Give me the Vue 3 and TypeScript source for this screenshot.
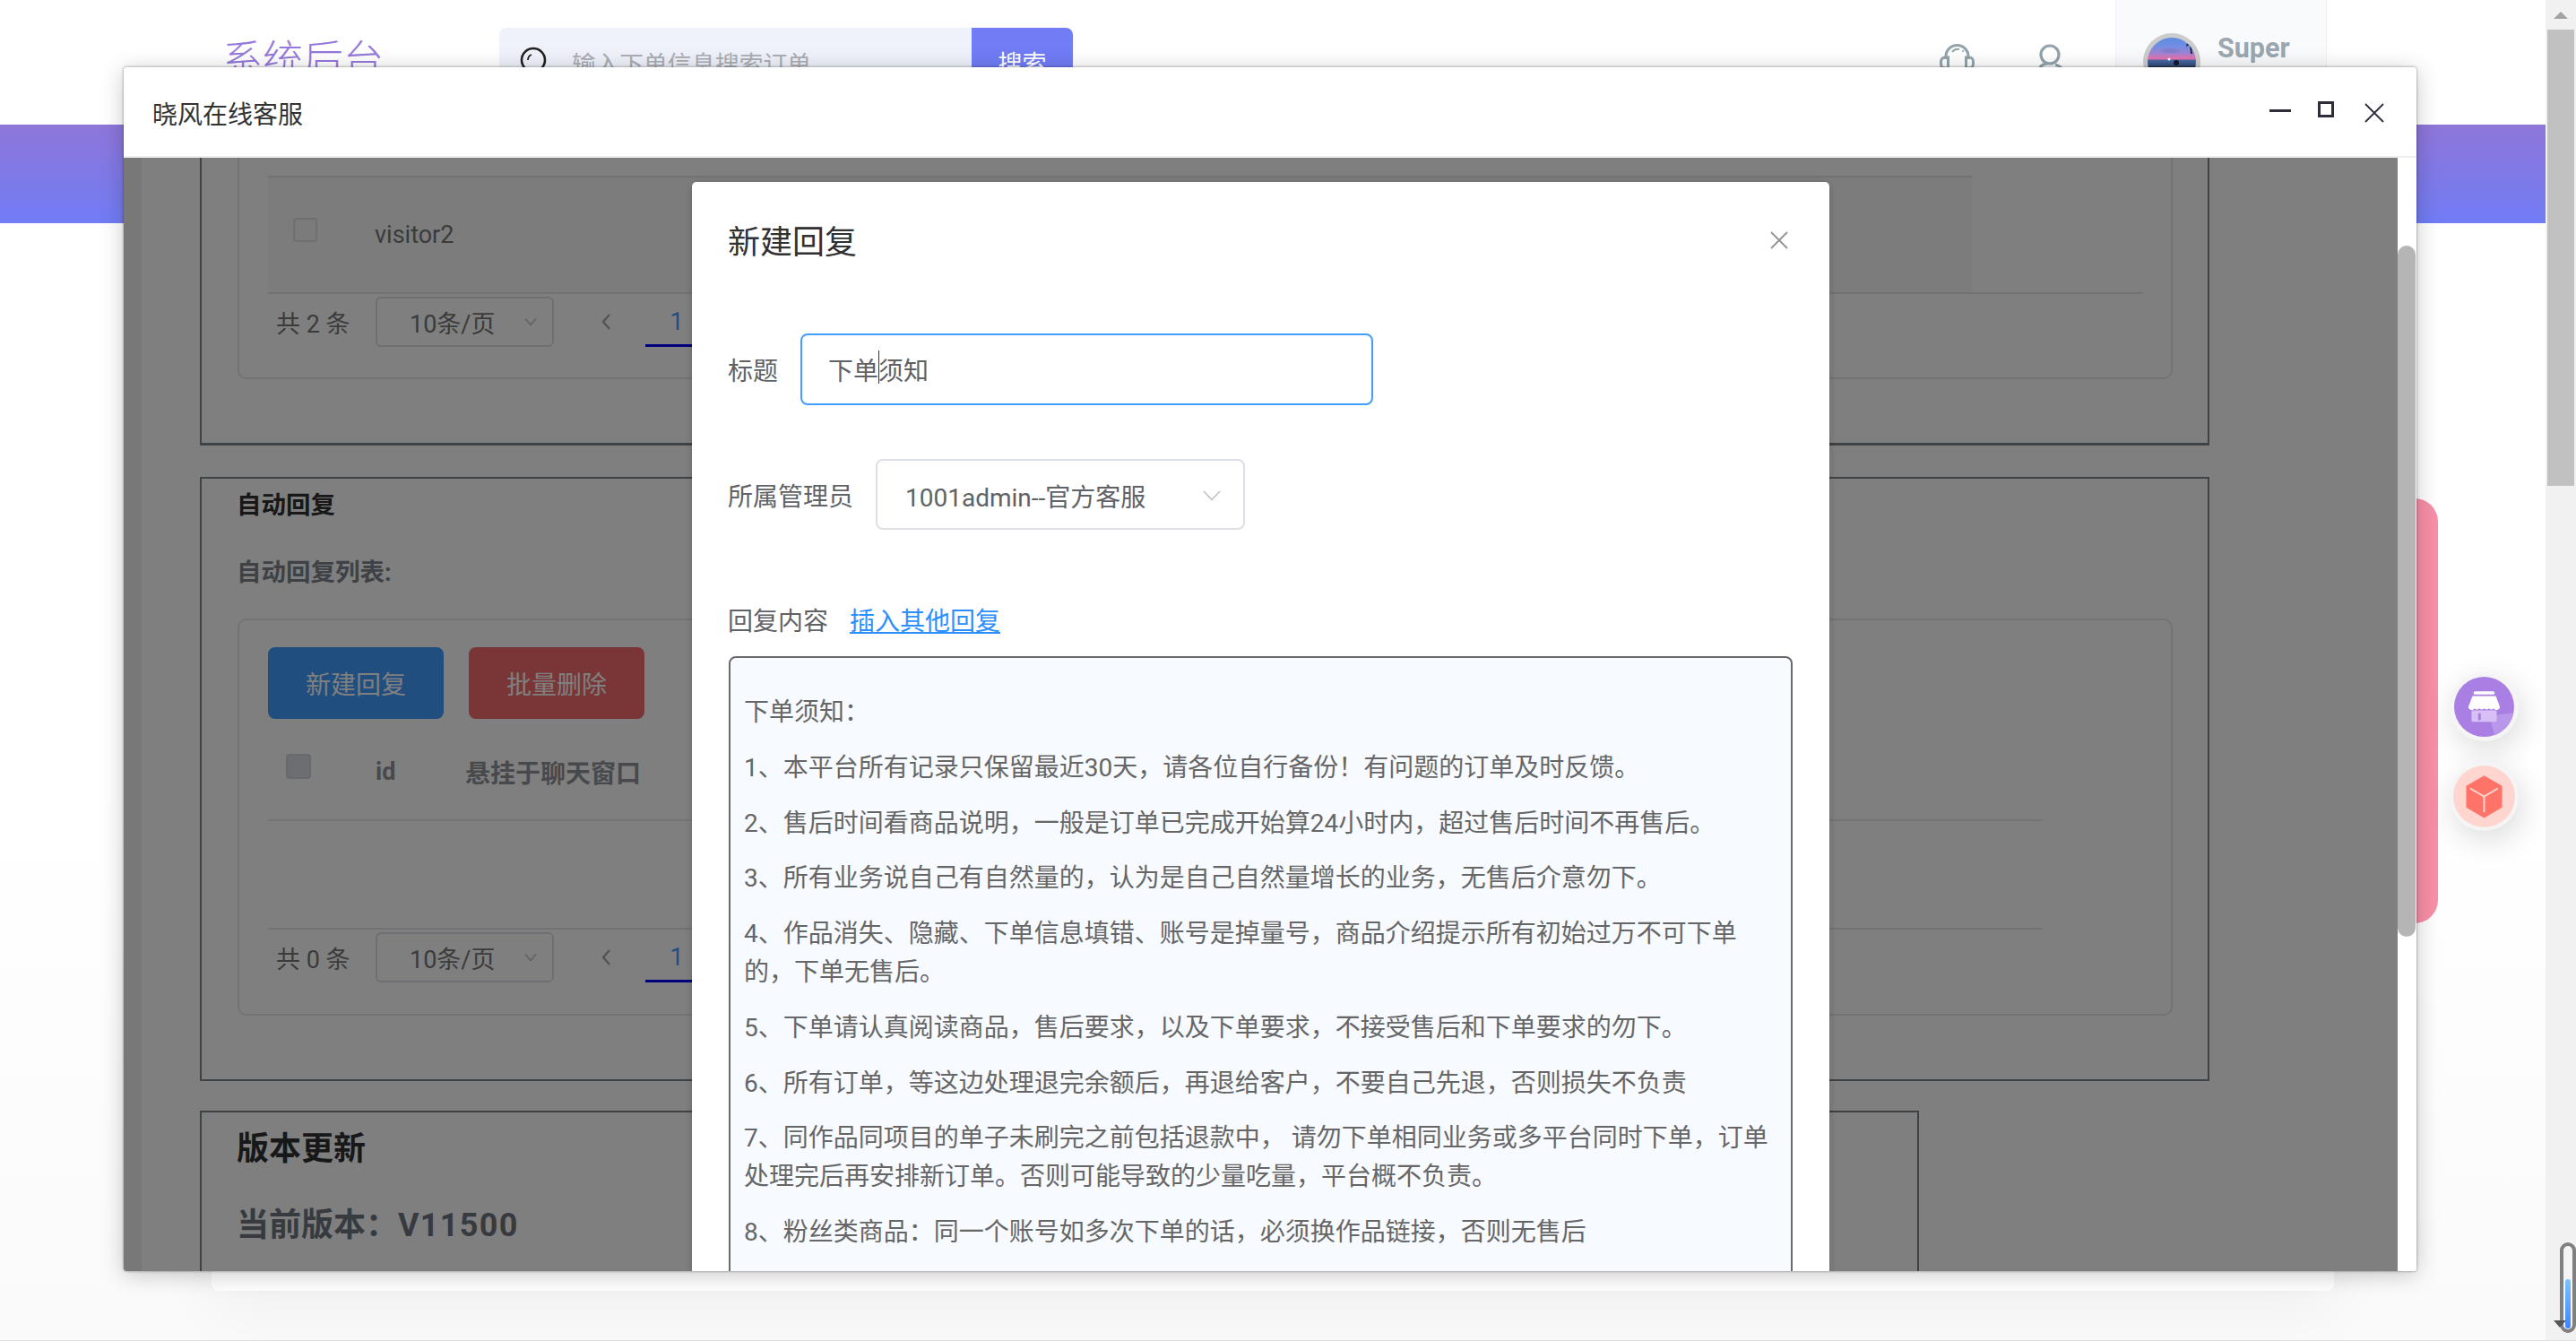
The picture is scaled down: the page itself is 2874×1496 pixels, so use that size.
<script setup lang="ts">
const paragraphs: string[] = [
  '下单须知：',
  '1、本平台所有记录只保留最近30天，请各位自行备份！有问题的订单及时反馈。',
  '2、售后时间看商品说明，一般是订单已完成开始算24小时内，超过售后时间不再售后。',
  '3、所有业务说自己有自然量的，认为是自己自然量增长的业务，无售后介意勿下。',
  '4、作品消失、隐藏、下单信息填错、账号是掉量号，商品介绍提示所有初始过万不可下单的，下单无售后。',
  '5、下单请认真阅读商品，售后要求，以及下单要求，不接受售后和下单要求的勿下。',
  '6、所有订单，等这边处理退完余额后，再退给客户，不要自己先退，否则损失不负责',
  '7、同作品同项目的单子未刷完之前包括退款中， 请勿下单相同业务或多平台同时下单，订单处理完后再安排新订单。否则可能导致的少量吃量，平台概不负责。',
  '8、粉丝类商品：同一个账号如多次下单的话，必须换作品链接，否则无售后',
]
</script>

<template>
  <div class="root">
    <div class="page">
      <header class="top">
        <div class="logo">系统后台</div>
        <div class="search">
          <svg class="search-icon" width="30" height="34" viewBox="0 0 30 34" fill="none" stroke="#222" stroke-width="2.6">
            <circle cx="15" cy="15" r="13" />
            <path d="M9 15c0-3 1.500-5 4-6" stroke-width="1.800" />
            <path d="M24 24l5 6" />
          </svg>
          <span class="search-ph">输入下单信息搜索订单</span>
          <span class="search-btn">搜索</span>
        </div>
        <div class="top-icons">
          <svg width="40" height="44" viewBox="0 0 40 44" fill="none" stroke="#93a3ab" stroke-width="3">
            <path d="M7 17v-3a12.500 12.500 0 0 1 25 0v3" />
            <path d="M14 9a8 8 0 0 1 8-3" stroke-width="2" />
            <circle cx="26" cy="8" r="1.100" fill="#93a3ab" stroke="none" />
            <path d="M9.500 15H6a4.500 4.500 0 0 0-4.500 4.500v3A4.500 4.500 0 0 0 6 27h3.500z" />
            <path d="M29.500 15H33a4.500 4.500 0 0 1 4.500 4.500v3A4.500 4.500 0 0 1 33 27h-3.500z" />
          </svg>
          <svg width="26" height="44" viewBox="0 0 26 44" fill="none" stroke="#93a3ab" stroke-width="3.200">
            <circle cx="12" cy="12" r="10" />
            <path d="M0 27c2-3 5-4.500 9-5M18 23c3 .500 5 2 7 4" />
          </svg>
        </div>
        <div class="user">
          <svg class="avatar" width="64" height="64" viewBox="0 0 64 64">
            <defs>
              <linearGradient id="sky" x1="0" y1="0" x2="0" y2="1">
                <stop offset="0" stop-color="#4f8ae0" />
                <stop offset=".22" stop-color="#6f8fe2" />
                <stop offset=".36" stop-color="#a682d2" />
                <stop offset=".45" stop-color="#ef6fa8" />
                <stop offset=".47" stop-color="#4a6aa8" />
                <stop offset=".56" stop-color="#34507f" />
                <stop offset=".6" stop-color="#1d2538" />
                <stop offset="1" stop-color="#141826" />
              </linearGradient>
              <clipPath id="avatar-clip"><circle cx="32" cy="32" r="27" /></clipPath>
            </defs>
            <circle cx="32" cy="32" r="32" fill="#cccccc" />
            <g clip-path="url(#avatar-clip)">
              <rect width="64" height="64" fill="url(#sky)" />
              <path d="M20 20c6-4 16-4 22 0-6 3-16 3-22 0z" fill="#7d7ec9" opacity=".85" />
              <path d="M50 6l4 2 3-2-2 5 3 3-4-1 1 10h-2l-1-10-4 2z" fill="#1f2a40" />
              <circle cx="29" cy="29" r="1.500" fill="#fff" />
              <circle cx="37" cy="33" r="3" fill="#14182a" />
            </g>
          </svg>
          <span class="user-name">Super</span>
        </div>
      </header>
      <div class="band"></div>
      <div class="sheet"></div>
    </div>

    <aside class="page-scroll">
      <span class="page-scroll-up"></span>
      <span class="page-scroll-thumb"></span>
    </aside>

    <div class="pink"></div>

    <div class="float-btn purple">
      <svg width="67" height="67" viewBox="-33.500 -33.500 67 67">
        <circle r="33.500" fill="#a97fe4" />
        <path d="M33 6.700L5.700 10l6 21.700A33.500 33.500 0 0 0 33 6.700z" fill="#b998ec" />
        <rect x="-11.700" y="-17.300" width="23.400" height="3.600" rx="1.500" fill="#fff" />
        <path d="M-13-12H13L17-1.500a3.200 3.200 0 0 1-6 3.200 3.900 3.900 0 0 1-5.600 0 3.900 3.900 0 0 1-5.400 0 3.900 3.900 0 0 1-5.400 0 3.900 3.900 0 0 1-5.600 0A3.200 3.200 0 0 1-17-1.500z" fill="#fff" />
        <rect x="-14" y="4" width="28" height="12.700" rx="1.500" fill="#d7c0f6" />
        <rect x="-6.700" y="7" width="3" height="8" rx="1" fill="#a97fe4" />
      </svg>
    </div>
    <div class="float-btn coral">
      <svg width="69" height="69" viewBox="-34.500 -34.500 69 69">
        <circle r="34.500" fill="#ffd5cf" />
        <path d="M0-23.300L20-11.700V12.300L0 24-20 12.300V-11.700z" fill="#ff7369" />
        <path d="M-15.700-9L0 0 15.300-9M0 0V17.700" fill="none" stroke="#ffd5cf" stroke-width="2" />
      </svg>
    </div>

    <div class="mini-meter">
      <span class="mini-fill"></span>
    </div>
    <span class="mini-arrow"></span>

    <section class="win">
      <div class="win-title">
        <span class="win-name">晓风在线客服</span>
        <div class="win-ctrls">
          <span class="ctrl-min"></span>
          <span class="ctrl-max"></span>
          <svg class="ctrl-close" width="22" height="22" viewBox="0 0 22 22" stroke="#2e2d3c" stroke-width="1.800">
            <path d="M1 1l20 20M21 1L1 21" />
          </svg>
        </div>
      </div>

      <div class="win-body">
        <div class="pane">
          <div class="strip"></div>
          <div class="content">
            <div class="box box-first">
              <div class="card card-first">
                <div class="rule"></div>
                <div class="visitor-row">
                  <span class="check"></span>
                  <span class="visitor-name">visitor2</span>
                </div>
                <div class="rule rule-wide"></div>
                <div class="pager">
                  <span class="total">共 2 条</span>
                  <span class="size">10条/页
                    <svg width="14" height="10" viewBox="0 0 14 10" fill="none" stroke="#c0c4cc" stroke-width="1.600"><path d="M1 1.500l6 7 6-7" /></svg>
                  </span>
                  <svg class="prev" width="12" height="20" viewBox="0 0 12 20" fill="none" stroke="#a8a8a8" stroke-width="2.400"><path d="M10 2L3 10l7 8" /></svg>
                  <span class="page-no">1</span>
                </div>
              </div>
            </div>

            <div class="box box-second">
              <h3 class="sec-title">自动回复</h3>
              <div class="sec-sub">自动回复列表:</div>
              <div class="card card-second">
                <div class="btns">
                  <span class="btn btn-blue">新建回复</span>
                  <span class="btn btn-red">批量删除</span>
                </div>
                <div class="thead">
                  <span class="check check-head"></span>
                  <span class="th-id">id</span>
                  <span class="th-name">悬挂于聊天窗口</span>
                </div>
                <div class="empty"></div>
                <div class="rule rule-wide"></div>
                <div class="pager pager-second">
                  <span class="total">共 0 条</span>
                  <span class="size">10条/页
                    <svg width="14" height="10" viewBox="0 0 14 10" fill="none" stroke="#c0c4cc" stroke-width="1.600"><path d="M1 1.500l6 7 6-7" /></svg>
                  </span>
                  <svg class="prev" width="12" height="20" viewBox="0 0 12 20" fill="none" stroke="#a8a8a8" stroke-width="2.400"><path d="M10 2L3 10l7 8" /></svg>
                  <span class="page-no">1</span>
                </div>
              </div>
            </div>

            <div class="box box-third">
              <h2 class="ver-title">版本更新</h2>
              <div class="ver-now">当前版本：<span class="ver-code">V11500</span></div>
            </div>
          </div>
          <div class="mask"></div>

          <div class="dialog">
            <div class="dlg-head">
              <span class="dlg-title">新建回复</span>
              <svg class="dlg-close" width="20" height="20" viewBox="0 0 20 20" stroke="#909399" stroke-width="1.800">
                <path d="M1 1l18 18M19 1L1 19" />
              </svg>
            </div>
            <div class="field field-title">
              <label class="lab">标题</label>
              <div class="input">下单<i class="caret"></i>须知</div>
            </div>
            <div class="field field-owner">
              <label class="lab">所属管理员</label>
              <div class="select">
                <span>1001admin--官方客服</span>
                <svg width="20" height="12" viewBox="0 0 20 12" fill="none" stroke="#c0c4cc" stroke-width="1.800"><path d="M1 1l9 9.500L19 1" /></svg>
              </div>
            </div>
            <div class="field-content">
              <label class="lab">回复内容</label>
              <a class="insert">插入其他回复</a>
            </div>
            <div class="editor">
              <p v-for="(line, i) in paragraphs" :key="i">{{ line }}</p>
            </div>
          </div>
        </div>
        <div class="win-scroll">
          <span class="win-thumb"></span>
        </div>
      </div>
    </section>
  </div>
</template>

<style scoped>
.root {
  position: relative;
  display: flex;
  width: 2874px;
  height: 1496px;
  overflow: hidden;
  background: #fafafa;
  border-bottom: 1px solid #dedede;
  box-sizing: border-box;
  font-family: Roboto, "Noto Sans CJK SC", sans-serif;
  color: #606266;
}
.page {
  width: 2840px;
  display: flex;
  flex-direction: column;
  background: linear-gradient(#fff 60%, #fafafa);
}
.top {
  height: 139px;
  display: flex;
  align-items: flex-start;
  background: #fff;
}
.logo {
  margin: 40px 0 0 248px;
  width: 176px;
  font-size: 45px;
  line-height: 56px;
  color: #9579dc;
  font-weight: 300;
  white-space: nowrap;
}
.search {
  margin: 31px 0 0 133px;
  width: 640px;
  height: 76px;
  display: flex;
  align-items: center;
  background: #eff2fa;
  border-radius: 8px;
  overflow: hidden;
}
.search-icon {
  margin-left: 23px;
  flex: none;
}
.search-ph {
  margin-left: 28px;
  width: 446px;
  font-size: 26.700px;
  color: #aaadb3;
  white-space: nowrap;
}
.search-btn {
  flex: 1;
  height: 100%;
  display: flex;
  align-items: center;
  justify-content: center;
  background: #717cf5;
  color: #fff;
  font-size: 27px;
}
.top-icons {
  margin: 49px 0 0 967px;
  display: flex;
  gap: 71px;
}
.user {
  margin-left: 59px;
  width: 236px;
  height: 139px;
  display: flex;
  align-items: flex-start;
  background: #f9fafc;
  border-left: 1px solid #f0f1f8;
  border-right: 1px solid #f0f1f8;
  box-sizing: border-box;
}
.avatar {
  margin: 37px 0 0 30px;
  flex: none;
}
.user-name {
  margin: 34px 0 0 19px;
  font-family: Roboto, sans-serif;
  font-weight: 700;
  font-size: 30.500px;
  line-height: 40px;
  color: #9aa7b0;
}
.band {
  height: 110px;
  background: linear-gradient(#8f76d9, #717cf5);
}
.sheet {
  width: 2368px;
  height: 1191px;
  margin: 0 auto;
  background: #fff;
  border-radius: 0 0 8px 8px;
  box-shadow: 0 16px 70px rgba(0, 0, 0, 0.05);
}
.page-scroll {
  width: 34px;
  background: #f1f1f1;
  display: flex;
  flex-direction: column;
  align-items: center;
}
.page-scroll-up {
  margin-top: 13px;
  width: 0;
  height: 0;
  border-left: 8px solid transparent;
  border-right: 8px solid transparent;
  border-bottom: 8px solid #a3a3a3;
}
.page-scroll-thumb {
  margin-top: 12px;
  width: 30px;
  height: 509px;
  background: #c1c1c1;
}
.pink {
  position: absolute;
  left: 2660px;
  top: 556px;
  width: 60px;
  height: 474px;
  border-radius: 0 26px 26px 0;
  background: #f78fa7;
}
.float-btn {
  position: absolute;
  left: 2733px;
  width: 77px;
  height: 77px;
  display: flex;
  align-items: center;
  justify-content: center;
  border-radius: 50%;
  background: #f5f5f5;
  box-shadow: 4px 10px 34px rgba(0, 0, 0, 0.14);
}
.purple {
  top: 750px;
}
.coral {
  top: 850px;
}
.mini-meter {
  position: absolute;
  left: 2856px;
  top: 1386px;
  width: 18px;
  height: 101px;
  box-sizing: border-box;
  border: 4px solid #808080;
  border-radius: 9px;
  background: #f4f4f4;
  display: flex;
  flex-direction: column;
  justify-content: flex-end;
  align-items: center;
  padding-bottom: 1px;
}
.mini-fill {
  width: 6px;
  height: 55px;
  border-radius: 3px;
  background: linear-gradient(#7cc4ff, #3d84ff);
}
.mini-arrow {
  position: absolute;
  left: 2849px;
  top: 1473px;
  width: 0;
  height: 0;
  border-left: 7px solid transparent;
  border-right: 7px solid transparent;
  border-top: 8px solid #555;
}
.win {
  position: absolute;
  left: 138px;
  top: 75px;
  width: 2558px;
  height: 1343px;
  display: flex;
  flex-direction: column;
  background: #fff;
  border-radius: 3px;
  box-shadow: 0 0 3px rgba(0, 0, 0, 0.45), 0 4px 26px rgba(0, 0, 0, 0.22);
  overflow: hidden;
}
.win-title {
  flex: none;
  display: flex;
  align-items: center;
  justify-content: space-between;
  padding: 2px 36px 0 32px;
  box-sizing: border-box;
  border-bottom: 2px solid #eeeeee;
  height: 101px;
}
.win-name {
  font-size: 28px;
  color: #333;
}
.win-ctrls {
  display: flex;
  align-items: center;
  gap: 30px;
}
.ctrl-min {
  width: 24px;
  height: 3px;
  background: #2e2d3c;
  margin-top: -4px;
}
.ctrl-max {
  width: 18px;
  height: 18px;
  box-sizing: border-box;
  border: 3px solid #2e2d3c;
  margin-top: -7px;
}
.ctrl-close {
  margin-left: 4px;
}
.win-body {
  position: relative;
  flex: 1;
  min-height: 0;
  display: flex;
}
.pane {
  position: relative;
  width: 2537px;
  display: flex;
  overflow: hidden;
  background: #fff;
}
.strip {
  width: 20px;
  flex: none;
  background: #f0f0f0;
}
.content {
  flex: 1;
  padding-left: 65px;
}
.mask {
  position: absolute;
  inset: 0;
  background: rgba(0, 0, 0, 0.5);
}
.win-scroll {
  flex: 1;
  background: #fff;
  padding-top: 98px;
}
.win-thumb {
  display: block;
  width: 20px;
  height: 771px;
  border-radius: 10px;
  background: #b5b5b5;
}
.box {
  box-sizing: border-box;
  width: 2242px;
  border: 2px solid #7a858f;
  padding-left: 39px;
}
.box-first {
  height: 321px;
  border-top: 0;
  border-bottom-width: 3px;
}
.box-second {
  height: 674px;
  margin-top: 35px;
}
.box-third {
  width: 1918px;
  height: 300px;
  margin-top: 33px;
}
.card {
  box-sizing: border-box;
  width: 2159px;
  margin-left: 1px;
  border: 2px solid #e6e6e6;
  border-radius: 10px;
  padding-left: 32px;
}
.card-first {
  height: 247px;
  border-top: 0;
  border-radius: 0 0 10px 10px;
  padding-top: 20px;
}
.rule {
  height: 2px;
  width: 1901px;
  background: #e4e5ea;
}
.rule-wide {
  width: 2092px;
}
.card-second .rule-wide {
  width: 1980px;
}
.visitor-row {
  width: 1901px;
  height: 128px;
  display: flex;
  align-items: center;
  background: #f8f8f8;
}
.check {
  flex: none;
  box-sizing: border-box;
  width: 27px;
  height: 27px;
  border: 2px solid #dcdfe6;
  border-radius: 4px;
  background: #f6f6f6;
}
.visitor-row .check {
  margin: -12px 0 0 28px;
}
.visitor-name {
  margin: 0 0 0 64px;
  font-size: 27px;
  color: #777;
}
.pager {
  display: flex;
  align-items: center;
  height: 56px;
  margin-top: 3px;
  font-size: 27px;
  color: #777;
}
.total {
  width: 120px;
  padding-left: 9px;
  box-sizing: border-box;
  white-space: nowrap;
}
.size {
  box-sizing: border-box;
  width: 199px;
  height: 56px;
  display: flex;
  align-items: center;
  justify-content: space-between;
  padding: 0 17px 0 36px;
  border: 2px solid #dcdfe6;
  border-radius: 6px;
}
.prev {
  margin-left: 52px;
  flex: none;
}
.page-no {
  margin-left: 38px;
  width: 70px;
  flex: none;
  height: 56px;
  box-sizing: border-box;
  border-bottom: 3px solid #0000ff;
  padding-top: 2px;
  display: flex;
  align-items: center;
  justify-content: center;
  color: #409eff;
}
.sec-title {
  margin: 0;
  padding-top: 12px;
  font-size: 27.500px;
  line-height: 36px;
  font-weight: 700;
  color: #303133;
}
.sec-sub {
  margin-top: 39px;
  font-size: 27.500px;
  line-height: 36px;
  font-weight: 700;
  color: #7d858c;
}
.card-second {
  height: 443px;
  margin-top: 33px;
  padding-top: 30px;
}
.btns {
  display: flex;
  gap: 28px;
}
.btn {
  width: 196px;
  height: 80px;
  display: flex;
  align-items: center;
  justify-content: center;
  border-radius: 8px;
  color: #fff;
  font-size: 28px;
}
.btn-blue {
  background: #409eff;
}
.btn-red {
  background: #f56c6c;
}
.thead {
  height: 94px;
  margin-top: 20px;
  width: 1980px;
  padding-bottom: 14px;
  display: flex;
  align-items: center;
  border-bottom: 2px solid #e6e8ee;
  box-sizing: border-box;
}
.check-head {
  width: 28px;
  height: 28px;
  margin: -12px 0 0 20px;
  background: #d8dde3;
  border-color: #d0d4da;
}
.th-id {
  margin-left: 72px;
  width: 100px;
  font-size: 27px;
  font-weight: 700;
  color: #909399;
}
.th-name {
  font-size: 28px;
  font-weight: 700;
  color: #909399;
  white-space: nowrap;
}
.empty {
  height: 119px;
}
.pager-second {
  margin-top: 3px;
}
.ver-title {
  margin: 0;
  padding-top: 18px;
  font-size: 36px;
  line-height: 46px;
  font-weight: 700;
  color: #303133;
}
.ver-now {
  margin-top: 39px;
  font-size: 36px;
  line-height: 46px;
  font-weight: 700;
  color: #6e767e;
}
.ver-code {
  letter-spacing: 1.300px;
}
.dialog {
  position: absolute;
  left: 634px;
  top: 27px;
  width: 1269px;
  height: 1400px;
  box-sizing: border-box;
  padding: 0 41px 0 40px;
  background: #fff;
  border-radius: 5px;
  box-shadow: 0 2px 8px rgba(0, 0, 0, 0.2);
}
.dlg-head {
  height: 169px;
  padding-top: 45px;
  box-sizing: border-box;
  display: flex;
  justify-content: space-between;
  align-items: flex-start;
}
.dlg-title {
  font-size: 36px;
  line-height: 46px;
  color: #303133;
}
.dlg-close {
  margin: 10px 5px 0 0;
}
.field {
  display: flex;
  align-items: center;
}
.lab {
  font-size: 28px;
  color: #606266;
  white-space: nowrap;
}
.input {
  position: relative;
  box-sizing: border-box;
  width: 639px;
  height: 80px;
  margin-left: 25px;
  padding-left: 29px;
  display: flex;
  align-items: center;
  border: 2px solid #409eff;
  border-radius: 8px;
  font-size: 28px;
  color: #606266;
}
.caret {
  width: 1px;
  height: 37px;
  margin: -6px -1px 0 0;
  background: #333;
}
.field-owner {
  margin-top: 60px;
}
.select {
  box-sizing: border-box;
  width: 412px;
  height: 79px;
  margin-left: 25px;
  padding: 2px 25px 0 31px;
  display: flex;
  align-items: center;
  justify-content: space-between;
  border: 2px solid #dcdfe6;
  border-radius: 8px;
  font-size: 28px;
  color: #606266;
  white-space: nowrap;
}
.field-content {
  margin-top: 79px;
  height: 42px;
  display: flex;
  align-items: center;
}
.insert {
  margin-left: 24px;
  font-size: 28px;
  color: #2b8fff;
  text-decoration: underline;
}
.editor {
  box-sizing: border-box;
  width: 1187px;
  margin: 20px 0 0 1px;
  height: 800px;
  padding: 39px 17px 0 15px;
  background: #f7faff;
  border: 2px solid #6a6a6a;
  border-radius: 8px;
  font-size: 28px;
  line-height: 43px;
  color: #666;
}
.editor p {
  margin: 0 0 18.750px;
}
</style>

<style>
html,
body {
  margin: 0;
  overflow: hidden;
}
</style>
